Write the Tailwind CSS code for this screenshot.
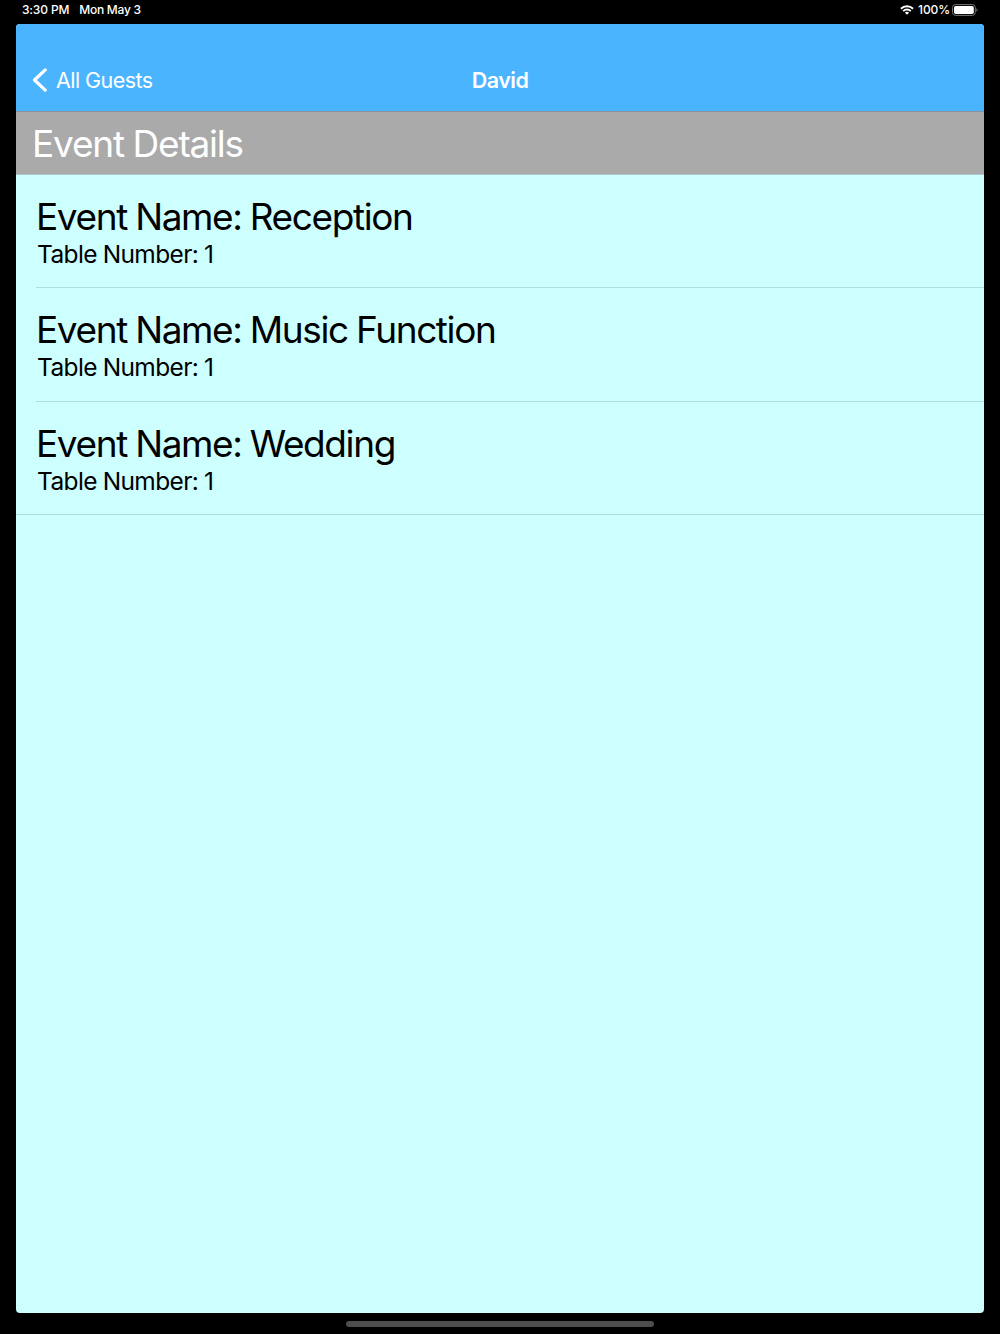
<!DOCTYPE html>
<html lang="en">
<head>
    <meta charset="UTF-8">
    <meta name="viewport" content="width=device-width, initial-scale=1.0">
    <title>David - Event Details</title>
    <script src="https://cdn.jsdelivr.net/npm/@tailwindcss/browser@4"></script>
</head>
<body class="bg-black font-['Inter','Liberation_Sans',sans-serif] antialiased">
    <div class="w-[1000px] h-[1334px] flex flex-col overflow-hidden">
        <!-- Status bar -->
        <div class="h-6 px-[22px] pb-1 flex items-center justify-between text-white text-[12px] font-medium leading-4">
            <div class="flex gap-[10px]">
                <span class="tracking-[-0.15px]">3:30 PM</span>
                <span class="tracking-[-0.25px]">Mon May 3</span>
            </div>
            <div class="flex items-center">
                <svg class="w-[14px] h-[10px] mr-1" viewBox="0 0 14 10" fill="none" stroke="white" stroke-width="1.9">
                    <path d="M0.9 3.8a8.7 8.7 0 0 1 12.2 0"/>
                    <path d="M3.2 6.1a5.4 5.4 0 0 1 7.6 0"/>
                    <path d="M7 9.8 4.9 7.7a3 3 0 0 1 4.2 0z" fill="white" stroke="none"/>
                </svg>
                <span class="tracking-[-0.1px]">100%</span>
                <svg class="w-[26px] h-3 ml-[2px]" viewBox="0 0 26 12">
                    <rect x="0.5" y="0.6" width="22.8" height="10.8" rx="3" fill="none" stroke="#777"/>
                    <rect x="2" y="2" width="19.8" height="8" rx="1.8" fill="white"/>
                    <path d="M24.4 4.2v3.6a2 2 0 0 0 0-3.6z" fill="#777"/>
                </svg>
            </div>
        </div>

        <div class="mx-4 h-[1289px] rounded-[4px] overflow-hidden bg-[#ceffff] flex flex-col">
            <!-- Navigation bar -->
            <nav class="h-22 pt-[25px] shrink-0 grid grid-cols-3 items-center bg-[#4ab4ff] border-b border-[#8b9299] text-white text-[21.5px]">
                <a href="#" class="flex items-center pl-4">
                    <svg class="w-[15px] h-6 mr-[9px]" viewBox="0 0 15 24" fill="none" stroke="white" stroke-width="3.2" stroke-linecap="round" stroke-linejoin="round">
                        <path d="M13.2 1.9 2.5 12l10.7 10.1"/>
                    </svg>
                    <span class="tracking-[-0.55px]">All Guests</span>
                </a>
                <h1 class="text-center font-semibold tracking-[-0.5px]">David</h1>
            </nav>

            <h2 class="h-[63px] pt-px shrink-0 pl-4 flex items-center bg-[#aaaaaa] border-b border-[#b0c8c8] text-white text-[37px] tracking-[-1.2px] [word-spacing:-0.5px]">Event Details</h2>

            <ul class="border-b border-[#b1dddd]">
                <li class="pl-5">
                    <div class="h-[113px] pt-5 border-b border-[#b1dddd]">
                        <p class="text-[37px] leading-[44px] tracking-[-1.4px] [word-spacing:-0.7px]">Event Name: Reception</p>
                        <p class="pl-px text-[24.5px] leading-[30px] tracking-[-0.62px] [word-spacing:-0.5px]">Table Number: 1</p>
                    </div>
                </li>
                <li class="pl-5">
                    <div class="h-[114px] pt-5 border-b border-[#b1dddd]">
                        <p class="text-[37px] leading-[44px] tracking-[-1.4px] [word-spacing:-0.7px]">Event Name: Music Function</p>
                        <p class="pl-px text-[24.5px] leading-[30px] tracking-[-0.62px] [word-spacing:-0.5px]">Table Number: 1</p>
                    </div>
                </li>
                <li class="pl-5">
                    <div class="h-[112px] pt-5">
                        <p class="text-[37px] leading-[44px] tracking-[-1.4px] [word-spacing:-0.7px]">Event Name: Wedding</p>
                        <p class="pl-px text-[24.5px] leading-[30px] tracking-[-0.62px] [word-spacing:-0.5px]">Table Number: 1</p>
                    </div>
                </li>
            </ul>
        </div>

        <!-- Home indicator -->
        <div class="mt-2 mx-auto w-[308px] h-[6px] rounded-full bg-[#4d4d4d]"></div>
    </div>
</body>
</html>
